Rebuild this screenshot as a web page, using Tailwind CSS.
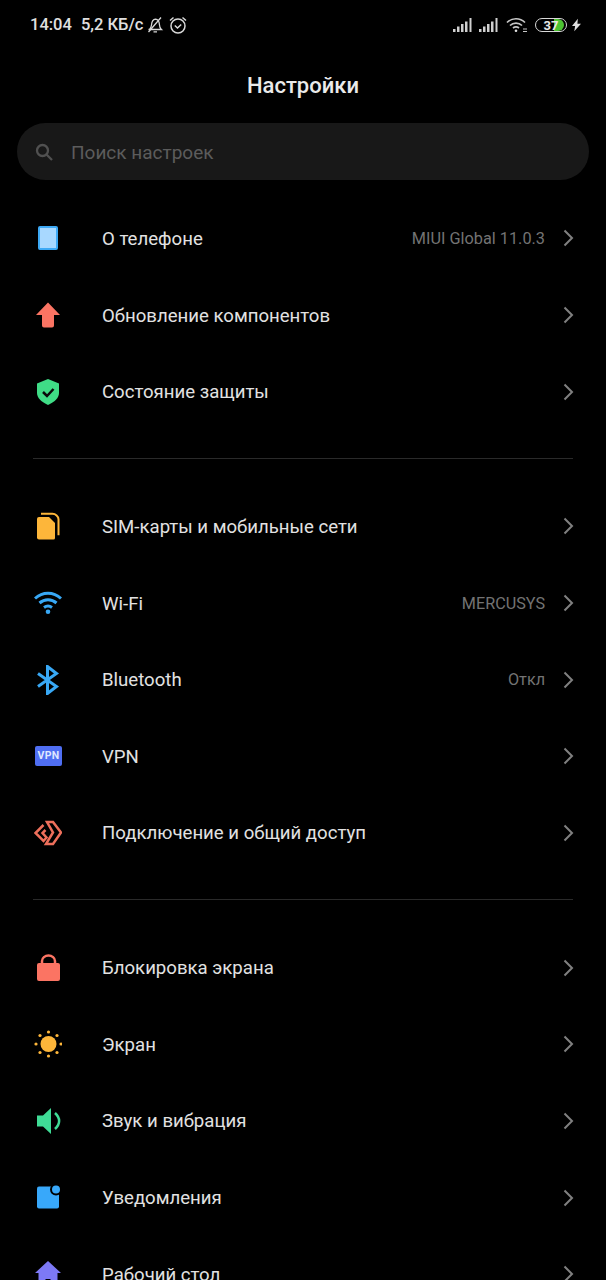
<!DOCTYPE html>
<html lang="ru"><head><meta charset="utf-8">
<script src="https://cdn.jsdelivr.net/npm/@tailwindcss/browser@4"></script></head>
<body class="bg-black">
<div class="w-[606px] h-[1280px] overflow-hidden bg-black text-[#e2e2e2] font-['Roboto',sans-serif]">
  <!-- status bar -->
  <div class="h-[50px] pl-[30px] pr-[25px] flex items-center justify-between">
    <div class="flex items-center text-[16.5px] font-medium text-[#e0e0e0]">
      <span>14:04</span><span class="ml-[9px]">5,2 КБ/с</span>
      <svg class="ml-[3px]" width="18" height="18" viewBox="0 0 18 18" fill="none" stroke="#d8d8d8" stroke-width="1.3"><path d="M3.500 13.500c1.300-1.300 1.800-2.500 2-4.500C5.800 5.500 7 3.500 9.500 3.200c2.500.3 3.700 2.300 3.900 5.300.1 2 .5 3.800 2 5H2.500"/><path d="M7.500 15.800h3.500M2.500 16 15 1.500"/></svg>
      <svg class="ml-[5px]" width="18" height="18" viewBox="0 0 18 18" fill="none" stroke="#d8d8d8" stroke-width="1.500"><circle cx="9" cy="10" r="7"/><path d="M5.800 9.500l2.700 2.500 3.700-3.500M1 4.500 4.500 1.500M17 4.500 13.500 1.500"/></svg>
    </div>
    <div class="flex items-center">
      <svg width="20" height="14" viewBox="0 0 20 14" fill="#d0d0d0"><rect x="0" y="11" width="2.500" height="3"/><rect x="4" y="8.500" width="2.500" height="5.500"/><rect x="8" y="6" width="2.500" height="8"/><rect x="12" y="3.500" width="2.500" height="10.500"/><rect x="16.500" y="0" width="2" height="14"/></svg>
      <svg class="ml-[6px]" width="20" height="14" viewBox="0 0 20 14" fill="#d0d0d0"><rect x="0" y="11" width="2.500" height="3"/><rect x="4" y="8.500" width="2.500" height="5.500"/><rect x="8" y="6" width="2.500" height="8"/><rect x="12" y="3.500" width="2.500" height="10.500"/><rect x="16.500" y="0" width="2" height="14"/></svg>
      <svg class="ml-[7px]" width="22" height="16" viewBox="0 0 22 16" fill="none" stroke="#c8c8c8" stroke-width="1.700"><path d="M1 5.500c5-5 13-5 18 0M4 8.500c3.300-3.200 8.700-3.200 12 0M7 11c1.700-1.400 4.300-1.400 6 0"/><circle cx="10" cy="13.800" r="1.300" fill="#e0e0e0" stroke="none"/><path d="M17 12h4M17 14.500h4" stroke-width="1"/></svg>
      <div class="ml-[7px] relative w-[32px] h-[14px] rounded-full border-[1.5px] border-[#d8d8d8] overflow-hidden flex items-center justify-center">
        <div class="absolute left-[18px] top-0 bottom-0 w-[10px] rounded-r-full bg-[#4cc332]"></div>
        <span class="relative text-[13px] font-bold leading-none text-[#e8e8e8]">37</span>
      </div>
      <svg class="ml-[5px]" width="9" height="14" viewBox="0 0 10 14" fill="#e0e0e0"><path d="M6.500 0 0 8h3.500L2.500 14 10 5.500H6z"/></svg>
    </div>
  </div>
  <!-- title -->
  <h1 class="h-[73px] pb-[3px] flex items-center justify-center text-[22px] font-medium text-[#eaeaea]">Настройки</h1>
  <!-- search -->
  <div class="mx-[17px] h-[57px] rounded-full bg-[#181818] flex items-center pl-[18px] text-[19px] text-[#5c5c5c]">
    <svg class="mt-[1px]" width="18" height="18" viewBox="0 0 18 18" fill="none" stroke="#505050" stroke-width="2.300"><circle cx="7.500" cy="7.500" r="5.500"/><path d="M11.500 11.500 17 17"/></svg>
    <span class="ml-[18px] pt-[3px]">Поиск настроек</span>
  </div>
  <!-- group 1 -->
  <div class="mt-[20px]">
    <div class="h-[76.670px] pl-[34px] pr-[32px] flex items-center">
      <div class="w-[28px] h-[28px] flex items-center justify-center"><div class="w-[20px] h-[24px] bg-[#a8d8ff] border-2 border-[#3da9f5] rounded-[2px]"></div></div>
      <span class="ml-[40px] flex-1 text-[18.6px] pt-[3px]">О телефоне</span>
      <span class="text-[16.3px] pt-[2px] text-[#737373]">MIUI Global 11.0.3</span>
      <svg class="ml-[18px]" width="11" height="18" viewBox="0 0 11 18" fill="none" stroke="#808080" stroke-width="2"><path d="M1.500 1.500 9 9l-7.500 7.500"/></svg>
    </div>
    <div class="h-[76.670px] pl-[34px] pr-[32px] flex items-center">
      <svg width="28" height="28" viewBox="0 0 28 28" fill="#fb7463"><path d="M14 1.500 26 14h-6v10.500a2 2 0 0 1-2 2h-8a2 2 0 0 1-2-2V14H2z"/></svg>
      <span class="ml-[40px] flex-1 text-[18.6px] pt-[3px]">Обновление компонентов</span>
      <svg width="11" height="18" viewBox="0 0 11 18" fill="none" stroke="#808080" stroke-width="2"><path d="M1.500 1.500 9 9l-7.500 7.500"/></svg>
    </div>
    <div class="h-[76.670px] pl-[34px] pr-[32px] flex items-center">
      <svg width="28" height="28" viewBox="0 0 28 28"><path d="M14 1 25 5.500v9.500c0 5-4.500 9-11 12C7.500 24 3 20 3 15V5.500z" fill="#3fdc86"/><path d="M9 14l4 4 6.500-7" fill="none" stroke="#0a0a0a" stroke-width="2.500"/></svg>
      <span class="ml-[40px] flex-1 text-[18.6px] pt-[3px]">Состояние защиты</span>
      <svg width="11" height="18" viewBox="0 0 11 18" fill="none" stroke="#808080" stroke-width="2"><path d="M1.500 1.500 9 9l-7.500 7.500"/></svg>
    </div>
  </div>
  <div class="mx-[33px] mt-[28px] mb-[29px] h-px bg-[#2a2a2a]"></div>
  <!-- group 2 -->
  <div>
    <div class="h-[76.670px] pl-[34px] pr-[32px] flex items-center">
      <svg width="28" height="28" viewBox="0 0 28 28"><path d="M3 7a2 2 0 0 1 2-2h10l6 6v15a1.500 1.500 0 0 1-1.500 1.500H5A2 2 0 0 1 3 25.500z" fill="#fdb63a"/><path d="M7 1.800h11.500c3 0 6 2.500 6 5.500v16" fill="none" stroke="#fdb63a" stroke-width="2"/></svg>
      <span class="ml-[40px] flex-1 text-[18.6px] pt-[3px]">SIM-карты и мобильные сети</span>
      <svg width="11" height="18" viewBox="0 0 11 18" fill="none" stroke="#808080" stroke-width="2"><path d="M1.500 1.500 9 9l-7.500 7.500"/></svg>
    </div>
    <div class="h-[76.670px] pl-[34px] pr-[32px] flex items-center">
      <svg width="28" height="28" viewBox="0 0 28 28" fill="none" stroke="#38a8f5" stroke-width="3"><path d="M1 9.500c7.500-7 18.500-7 26 0M5.500 14c5-4.400 12-4.400 17 0M10 18.500c2.500-1.800 5.500-1.800 8 0"/><circle cx="14" cy="22.800" r="2.300" fill="#38a8f5" stroke="none"/></svg>
      <span class="ml-[40px] flex-1 text-[18.6px] pt-[3px]">Wi-Fi</span>
      <span class="text-[16.2px] pt-[2px] text-[#737373]">MERCUSYS</span>
      <svg class="ml-[18px]" width="11" height="18" viewBox="0 0 11 18" fill="none" stroke="#808080" stroke-width="2"><path d="M1.500 1.500 9 9l-7.500 7.500"/></svg>
    </div>
    <div class="h-[76.670px] pl-[34px] pr-[32px] flex items-center">
      <svg width="28" height="30" viewBox="0 0 28 30" fill="none" stroke="#38a8f5" stroke-width="3"><path d="M4 8.500 22.500 21.500 13.500 28.500V1.500L22.500 8.500 4 21.500"/></svg>
      <span class="ml-[40px] flex-1 text-[18.6px] pt-[3px]">Bluetooth</span>
      <span class="text-[16.2px] pt-[2px] text-[#737373]">Откл</span>
      <svg class="ml-[18px]" width="11" height="18" viewBox="0 0 11 18" fill="none" stroke="#808080" stroke-width="2"><path d="M1.500 1.500 9 9l-7.500 7.500"/></svg>
    </div>
    <div class="h-[76.670px] pl-[34px] pr-[32px] flex items-center">
      <div class="ml-[1px] w-[27px] h-[20px] rounded-[2px] bg-[#4f6ef2] flex items-center justify-center text-[10.500px] font-bold text-[#dfe6ff] tracking-[0.3px]">VPN</div>
      <span class="ml-[40px] flex-1 text-[18.6px] pt-[3px]">VPN</span>
      <svg width="11" height="18" viewBox="0 0 11 18" fill="none" stroke="#808080" stroke-width="2"><path d="M1.500 1.500 9 9l-7.500 7.500"/></svg>
    </div>
    <div class="h-[76.670px] pl-[34px] pr-[32px] flex items-center">
      <svg width="28" height="28" viewBox="0 0 28 28" fill="none" stroke="#ee6f5b" stroke-width="2.500"><path d="M13 3h6l8 10.500L19 25h-7l7-11.500L13 3z"/><path d="M9.500 6 1.500 14l8 8 3-3.500-4-4.500 3-3"/></svg>
      <span class="ml-[40px] flex-1 text-[18.6px] pt-[3px]">Подключение и общий доступ</span>
      <svg width="11" height="18" viewBox="0 0 11 18" fill="none" stroke="#808080" stroke-width="2"><path d="M1.500 1.500 9 9l-7.500 7.500"/></svg>
    </div>
  </div>
  <div class="mx-[33px] mt-[28px] mb-[29px] h-px bg-[#2a2a2a]"></div>
  <!-- group 3 -->
  <div>
    <div class="h-[76.670px] pl-[34px] pr-[32px] flex items-center">
      <svg width="28" height="28" viewBox="0 0 28 28"><rect x="3" y="9" width="23" height="18" rx="2" fill="#fb7463"/><path d="M8 10V7c0-3 3-5.500 6.500-5.500S21 4 21 7v3" fill="none" stroke="#fb7463" stroke-width="2.500"/></svg>
      <span class="ml-[40px] flex-1 text-[18.6px] pt-[3px]">Блокировка экрана</span>
      <svg width="11" height="18" viewBox="0 0 11 18" fill="none" stroke="#808080" stroke-width="2"><path d="M1.500 1.500 9 9l-7.500 7.500"/></svg>
    </div>
    <div class="h-[76.670px] pl-[34px] pr-[32px] flex items-center">
      <svg width="28" height="28" viewBox="0 0 28 28" fill="#fdb63a"><circle cx="14.500" cy="14" r="8"/><circle cx="14.500" cy="2" r="1.600"/><circle cx="14.500" cy="26" r="1.600"/><circle cx="2" cy="14" r="1.600"/><circle cx="27" cy="14" r="1.600"/><circle cx="6" cy="5.500" r="1.600"/><circle cx="23" cy="5.500" r="1.600"/><circle cx="6" cy="22.500" r="1.600"/><circle cx="23" cy="22.500" r="1.600"/></svg>
      <span class="ml-[40px] flex-1 text-[18.6px] pt-[3px]">Экран</span>
      <svg width="11" height="18" viewBox="0 0 11 18" fill="none" stroke="#808080" stroke-width="2"><path d="M1.500 1.500 9 9l-7.500 7.500"/></svg>
    </div>
    <div class="h-[76.670px] pl-[34px] pr-[32px] flex items-center">
      <svg width="28" height="28" viewBox="0 0 28 28"><path d="M3 8.500h6L17 1v26l-8-7.500H3z" fill="#3fdc96"/><path d="M21 6c5.500 5 5.500 11 0 16" fill="none" stroke="#3fdc96" stroke-width="2.500"/></svg>
      <span class="ml-[40px] flex-1 text-[18.6px] pt-[3px]">Звук и вибрация</span>
      <svg width="11" height="18" viewBox="0 0 11 18" fill="none" stroke="#808080" stroke-width="2"><path d="M1.500 1.500 9 9l-7.500 7.500"/></svg>
    </div>
    <div class="h-[76.670px] pl-[34px] pr-[32px] flex items-center">
      <svg width="28" height="28" viewBox="0 0 28 28"><rect x="3" y="2.500" width="22" height="22" rx="2" fill="#38a8fa"/><circle cx="22" cy="5.500" r="6" fill="#000"/><circle cx="22" cy="5.500" r="4" fill="#38a8fa"/></svg>
      <span class="ml-[40px] flex-1 text-[18.6px] pt-[3px]">Уведомления</span>
      <svg width="11" height="18" viewBox="0 0 11 18" fill="none" stroke="#808080" stroke-width="2"><path d="M1.500 1.500 9 9l-7.500 7.500"/></svg>
    </div>
    <div class="h-[76.670px] pl-[34px] pr-[32px] flex items-center">
      <svg width="28" height="28" viewBox="0 0 28 28"><path d="M14 1 27 13h-3.500V27H16.500v-8h-5v8H4.500V13H1z" fill="#7d79f5"/></svg>
      <span class="ml-[40px] flex-1 text-[18.6px] pt-[3px]">Рабочий стол</span>
      <svg width="11" height="18" viewBox="0 0 11 18" fill="none" stroke="#808080" stroke-width="2"><path d="M1.500 1.500 9 9l-7.500 7.500"/></svg>
    </div>
  </div>
</div>
</body></html>
